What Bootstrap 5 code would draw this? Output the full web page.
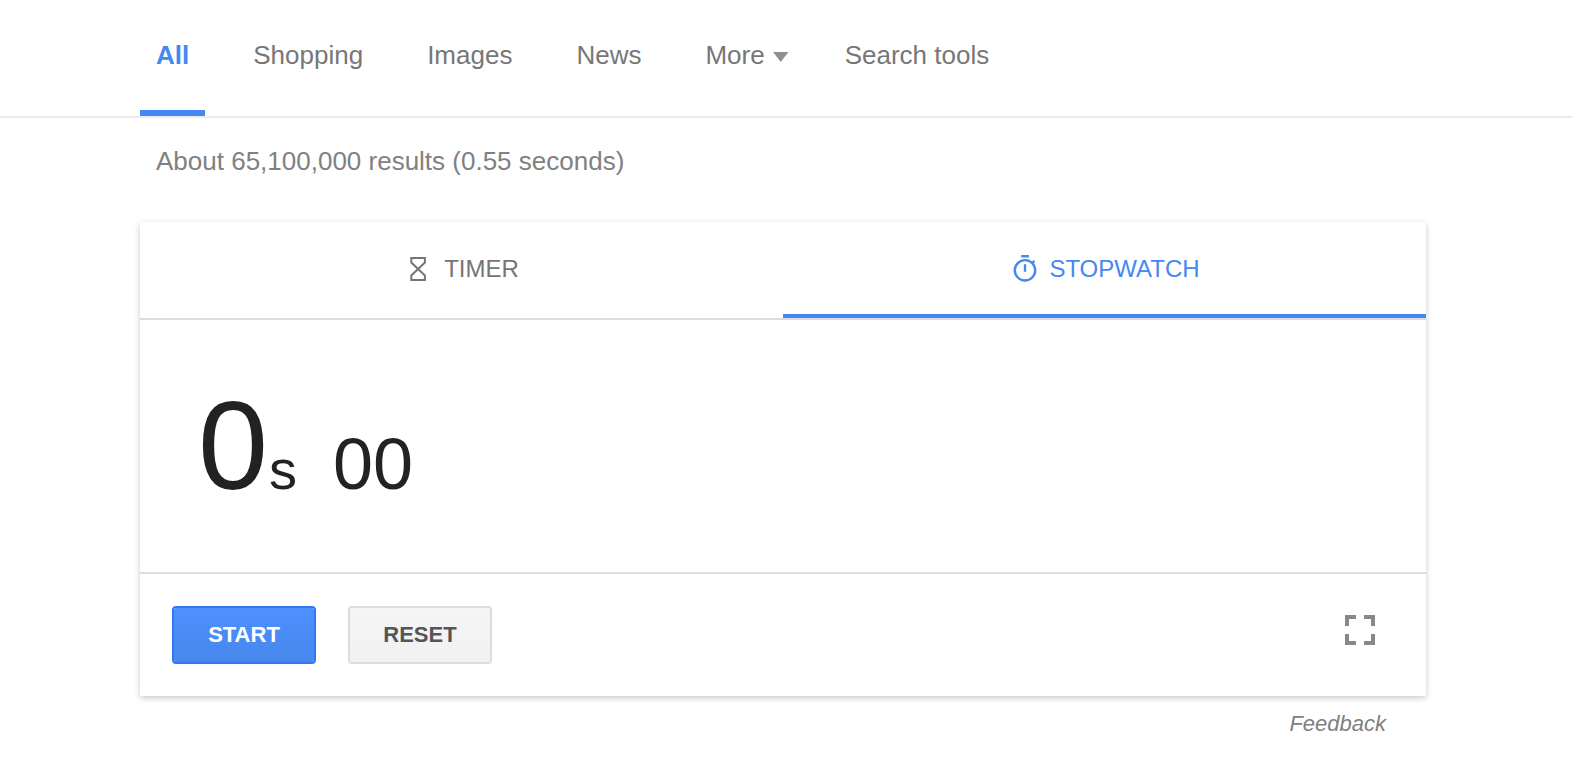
<!DOCTYPE html>
<html lang="en">
<head>
<meta charset="utf-8">
<meta name="viewport" content="width=device-width, initial-scale=1">
<title>Stopwatch</title>
<link href="https://cdn.jsdelivr.net/npm/bootstrap@5.3.0/dist/css/bootstrap.min.css" rel="stylesheet">
<style>
  body { font-family: "Liberation Sans", Arial, sans-serif; color: #222; font-size: 26px; line-height: 32px; }
  .page-inset { margin-left: 140px; margin-right: 146px; }
  .search-nav { border-bottom: 2px solid #ebebeb; }
  .search-nav .nav { column-gap: 32px; }
  .search-nav .nav-link { color: #777; padding: 39px 16px; border-bottom: 6px solid transparent; height: 116px; }
  .search-nav .nav-link.active { color: #4688f1; border-bottom-color: #4688f1; }
  .search-nav .more-link { padding-right: 8px; }
  .caret { width: 16px; height: 10px; margin: 3px 0 0 8px; }
  .stats { color: #808080; padding: 27px 16px 0; margin-bottom: 45px; }
  .watch { box-shadow: 0 2px 6px rgba(0,0,0,.22); background: #fff; }
  .watch-tabs { border-bottom: 2px solid #dcdcdc; }
  .watch-tabs .nav-link { color: #757575; font-size: 24px; border-bottom: 4px solid transparent; border-radius: 0; height: 96px; padding: 2px 0 0; }
  .watch-tabs .nav-link.active { color: #4688f1; border-bottom-color: #4688f1; }
  .tab-icon { width: 32px; height: 32px; }
  .display { height: 254px; padding: 54px 58px 0; border-bottom: 2px solid #dcdcdc; color: #222; }
  .num-main { font-size: 126px; line-height: 144px; }
  .num-unit { font-size: 56px; margin-left: 1px; }
  .num-frac { font-size: 72px; margin-left: 36px; }
  .controls { padding: 32px; }
  .button-row { gap: 32px; }
  .controls .btn { width: 144px; height: 58px; font-size: 22px; line-height: 32px; border-width: 2px; border-radius: 4px; padding: 0; }
  .btn-start { color: #fff; border-color: #3079ed; background: linear-gradient(#4d90fe, #4787ed) padding-box; }
  .btn-start:hover { color: #fff; border-color: #2f5bb7; }
  .btn-reset { color: #555; border-color: #dcdcdc; background: linear-gradient(#f5f5f5, #f1f1f1) padding-box; }
  .btn-full { margin: 9px 19px 0 0; color: #888; }
  .feedback { color: #808080; font-size: 22px; padding-right: 40px; margin-top: 12px; }
</style>
</head>
<body class="bg-white">
<header class="search-nav">
  <nav class="page-inset" aria-label="Search categories">
    <ul class="nav">
      <li class="nav-item"><a class="nav-link active fw-bold" aria-current="page" href="#">All</a></li>
      <li class="nav-item"><a class="nav-link" href="#">Shopping</a></li>
      <li class="nav-item"><a class="nav-link" href="#">Images</a></li>
      <li class="nav-item"><a class="nav-link" href="#">News</a></li>
      <li class="nav-item"><a class="nav-link more-link d-flex align-items-center" href="#">More<svg class="caret" viewBox="0 0 16 10" aria-hidden="true"><path d="M0 0h15.500L7.750 10z" fill="#909090"/></svg></a></li>
      <li class="nav-item"><a class="nav-link" href="#">Search tools</a></li>
    </ul>
  </nav>
</header>

<main class="page-inset">
  <p class="stats">About 65,100,000 results (0.55 seconds)</p>

  <section class="watch" aria-label="Stopwatch">
    <ul class="nav nav-fill watch-tabs row g-0">
      <li class="nav-item col-6">
        <a class="nav-link d-flex align-items-center justify-content-center gap-2" href="#">
          <svg class="tab-icon" viewBox="0 0 32 32" fill="none" stroke="currentColor" stroke-width="2" aria-hidden="true"><path d="M7.300 5h13.600v4.600L7.300 22.400V27h13.600v-4.600L7.300 9.600z"/></svg>
          TIMER
        </a>
      </li>
      <li class="nav-item col-6">
        <a class="nav-link active d-flex align-items-center justify-content-center gap-2" href="#">
          <svg class="tab-icon" viewBox="0 0 32 32" fill="none" stroke="currentColor" stroke-width="2.400" aria-hidden="true"><circle cx="16" cy="17.300" r="10.200"/><path d="M12.200 3.300h7.700M16 11.300v7.400M23.300 10l2.200-2.200"/></svg>
          STOPWATCH
        </a>
      </li>
    </ul>

    <div class="display d-flex align-items-baseline">
      <span class="num-main">0</span><span class="num-unit">s</span><span class="num-frac">00</span>
    </div>

    <div class="controls d-flex align-items-start justify-content-between">
      <div class="button-row d-flex">
        <button type="button" class="btn btn-start fw-bold">START</button>
        <button type="button" class="btn btn-reset fw-bold">RESET</button>
      </div>
      <button type="button" class="btn-full border-0 bg-transparent p-0 d-flex" aria-label="Full screen">
        <svg viewBox="0 0 30 30" width="30" height="30" fill="none" stroke="currentColor" stroke-width="4" aria-hidden="true"><path d="M2 11V2h9M19 2h9v9M28 19v9h-9M11 28H2v-9"/></svg>
      </button>
    </div>
  </section>

  <div class="feedback text-end"><a class="text-reset text-decoration-none fst-italic" href="#">Feedback</a></div>
</main>
<script src="https://cdn.jsdelivr.net/npm/bootstrap@5.3.0/dist/js/bootstrap.bundle.min.js"></script>
</body>
</html>
